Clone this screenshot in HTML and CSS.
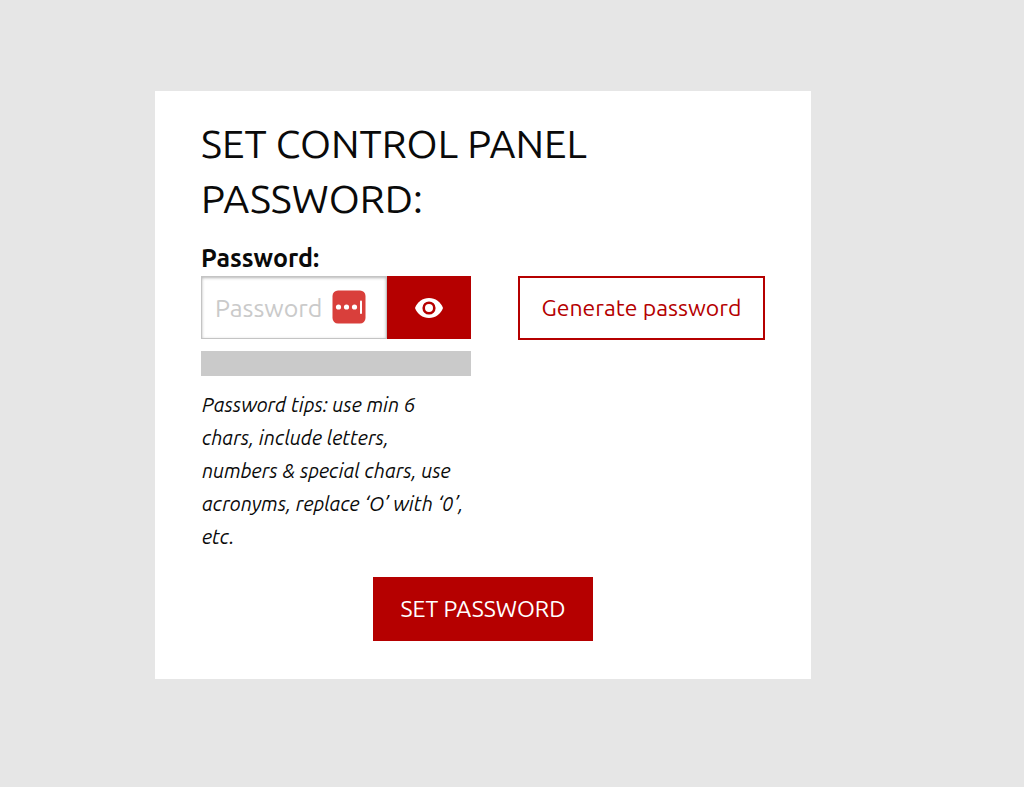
FILE: index.html
```html
<!DOCTYPE html>
<html lang="en">
<head>
<meta charset="utf-8">
<meta name="viewport" content="width=device-width, initial-scale=1">
<title>Set control panel password</title>
<link rel="stylesheet" href="styles.css">
</head>
<body>
<main class="page">
  <form class="card">
    <h1 class="title">SET CONTROL PANEL PASSWORD:</h1>
    <div class="row">
      <div class="field">
        <label class="label" for="password">Password:</label>
        <div class="group">
          <div class="box">
            <input class="input" id="password" type="password" placeholder="Password">
            <svg class="manager" viewBox="0 0 34 34" aria-hidden="true">
              <rect x=".5" y=".5" width="33" height="33" rx="5.500" fill="#d93f3b"/>
              <g fill="#fff"><circle cx="6.500" cy="17" r="2.600"/><circle cx="14.500" cy="17" r="2.600"/><circle cx="22.500" cy="17" r="2.600"/><rect x="28" y="10.500" width="2" height="13.500" rx=".9"/></g>
            </svg>
          </div>
          <button class="toggle" type="button" aria-label="Show password">
            <svg class="eye" viewBox="0 0 28 20" aria-hidden="true">
              <path fill="#fff" d="M14 0C7.600 0 2.200 4 0 10c2.200 6 7.600 10 14 10s11.800-4 14-10C25.800 4 20.400 0 14 0z"/>
              <circle cx="14" cy="10" r="5.300" fill="#fff" stroke="#b50000" stroke-width="2.600"/>
            </svg>
          </button>
        </div>
        <div class="meter"></div>
        <p class="tips">Password tips: use min 6 chars, include letters, numbers &amp; special chars, use acronyms, replace ‘O’ with ‘0’, etc.</p>
      </div>
      <button class="generate" type="button">Generate password</button>
    </div>
    <button class="submit" type="submit">SET PASSWORD</button>
  </form>
</main>
</body>
</html>
```
FILE: styles.css
```css
* { box-sizing: border-box; }
body {
  margin: 0;
  background: #e6e6e6;
  color: #0a0a0a;
  font-family: Ubuntu, "Open Sans", "Noto Sans", sans-serif;
}
button, input { font: inherit; border-radius: 0; margin: 0; }
.page { padding: 91px 213px 108px 155px; }
.card {
  display: flex;
  flex-direction: column;
  padding: 25px 46px 38px;
  background: #fff;
}
.title { margin: 0; font-size: 40px; line-height: 55px; font-weight: 400; }
.row {
  display: grid;
  grid-template-columns: 270px 1fr;
  column-gap: 47px;
  align-items: start;
  margin-top: 14px;
}
.label { display: block; font-size: 25px; line-height: 36px; font-weight: 700; }
.group { display: flex; height: 63px; }
.box { position: relative; flex: 1; }
.input {
  width: 100%;
  height: 100%;
  padding: 0 13px;
  border: 1px solid #c4c4c4;
  font-size: 25px;
  box-shadow: inset 0 1px 3px rgba(10, 10, 10, .3);
}
.input::placeholder { color: #cacaca; opacity: 1; }
.manager { position: absolute; top: 14px; right: 21px; width: 34px; height: 34px; }
.toggle {
  display: flex;
  align-items: center;
  justify-content: center;
  width: 84px;
  padding: 0;
  border: 0;
  background: #b50000;
}
.eye { width: 28px; height: 20px; }
.meter { height: 25px; margin-top: 12px; background: #cacaca; }
.tips {
  margin: 12px 0 0;
  padding: 0 2px 0 1px;
  font-size: 20px;
  line-height: 33px;
  font-style: italic;
}
.generate {
  height: 64px;
  margin-top: 36px;
  border: 2px solid #b50000;
  padding: 0 0 2px;
  background: #fff;
  color: #b50000;
  font-size: 23px;
}
.submit {
  align-self: center;
  height: 64px;
  margin-top: 24px;
  padding: 0 28px 2px;
  border: 0;
  background: #b50000;
  color: #fff;
  font-size: 23px;
}
```
